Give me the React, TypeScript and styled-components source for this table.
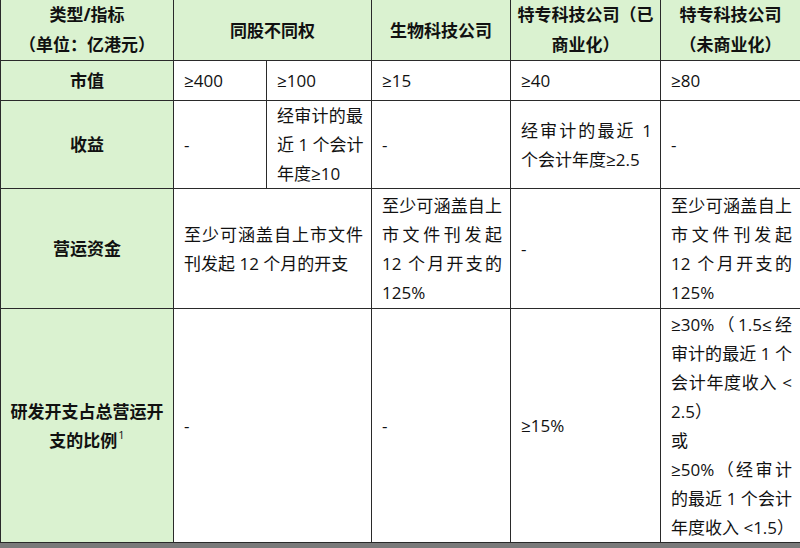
import React from "react";
import styled, { createGlobalStyle } from "styled-components";

const Global = createGlobalStyle`
  html, body { margin: 0; padding: 0; background: #7a7a7a; }
  body { font-family: "Open Sans", "Noto Sans CJK SC", sans-serif; color: #111; }
`;

const green = "#daf2d0";
const line = "#2a2a2a";

const Table = styled.table`
  border-collapse: collapse;
  table-layout: fixed;
  width: 800px;
  background: #fff;
  font-size: 17px;
`;

const Row = styled.tr<{ $h: number }>`
  height: ${(p) => p.$h}px;
`;

const Cell = styled.td<{ $head?: boolean }>`
  border: 1px solid ${line};
  border-top: ${(p) => (p.$head ? "none" : `1px solid ${line}`)};
  background: ${(p) => (p.$head ? green : "#fff")};
  padding: 0 8px 0 10px;
  vertical-align: middle;
  text-align: left;
  line-height: 29px;
  font-weight: 400;
`;

const HeadCell = styled(Cell).attrs({ as: "th" })`
  font-weight: 700;
  text-align: center;
  padding: 0 4px;
`;

const Label = styled(Cell)`
  background: ${green};
  font-weight: 700;
  text-align: center;
  padding: 0 4px;
`;

const Line = styled.div<{ $justify?: boolean; $h?: number }>`
  height: ${(p) => p.$h ?? 29}px;
  line-height: ${(p) => p.$h ?? 29}px;
  text-align: ${(p) => (p.$justify ? "justify" : "inherit")};
  text-align-last: ${(p) => (p.$justify ? "justify" : "auto")};
  white-space: nowrap;
`;

const Sup = styled.span`
  font-size: 11px;
  line-height: 0;
  vertical-align: 8px;
  font-weight: 400;
  margin-left: 1px;
`;

const Lines: React.FC<{ lines: string[]; last?: number[] }> = ({ lines, last = [] }) => (
  <>
    {lines.map((t, i) => (
      <Line key={i} $justify={i < lines.length - 1 && !last.includes(i)}>
        {t}
      </Line>
    ))}
  </>
);

const cols = [173, 93, 105, 139, 150, 140];

export default function App() {
  return (
    <>
      <Global />
      <Table>
        <colgroup>
          {cols.map((w, i) => (
            <col key={i} style={{ width: w }} />
          ))}
        </colgroup>
        <tbody>
          <Row $h={60}>
            <HeadCell $head>
              <Line $h={30}>类型/指标</Line>
              <Line $h={30}>（单位：亿港元）</Line>
            </HeadCell>
            <HeadCell $head colSpan={2}>同股不同权</HeadCell>
            <HeadCell $head>生物科技公司</HeadCell>
            <HeadCell $head>
              <Line $h={30}>特专科技公司（已</Line>
              <Line $h={30}>商业化）</Line>
            </HeadCell>
            <HeadCell $head>
              <Line $h={30}>特专科技公司</Line>
              <Line $h={30}>（未商业化）</Line>
            </HeadCell>
          </Row>
          <Row $h={40}>
            <Label>市值</Label>
            <Cell>≥400</Cell>
            <Cell>≥100</Cell>
            <Cell>≥15</Cell>
            <Cell>≥40</Cell>
            <Cell>≥80</Cell>
          </Row>
          <Row $h={88}>
            <Label>收益</Label>
            <Cell>-</Cell>
            <Cell>
              <Lines lines={["经审计的最", "近 1 个会计", "年度≥10"]} />
            </Cell>
            <Cell>-</Cell>
            <Cell>
              <Lines lines={["经审计的最近 1", "个会计年度≥2.5"]} />
            </Cell>
            <Cell>-</Cell>
          </Row>
          <Row $h={120}>
            <Label>营运资金</Label>
            <Cell colSpan={2}>
              <Lines lines={["至少可涵盖自上市文件", "刊发起 12 个月的开支"]} />
            </Cell>
            <Cell>
              <Lines lines={["至少可涵盖自上", "市文件刊发起", "12 个月开支的", "125%"]} />
            </Cell>
            <Cell>-</Cell>
            <Cell>
              <Lines lines={["至少可涵盖自上", "市文件刊发起", "12 个月开支的", "125%"]} />
            </Cell>
          </Row>
          <Row $h={234}>
            <Label>
              <Line>研发开支占总营运开</Line>
              <Line>
                支的比例<Sup>1</Sup>
              </Line>
            </Label>
            <Cell colSpan={2}>-</Cell>
            <Cell>-</Cell>
            <Cell>≥15%</Cell>
            <Cell>
              <Lines
                lines={[
                  "≥30%（1.5≤经",
                  "审计的最近 1 个",
                  "会计年度收入 <",
                  "2.5）",
                  "或",
                  "≥50%（经审计",
                  "的最近 1 个会计",
                  "年度收入 <1.5）",
                ]}
                last={[3, 4]}
              />
            </Cell>
          </Row>
        </tbody>
      </Table>
    </>
  );
}
